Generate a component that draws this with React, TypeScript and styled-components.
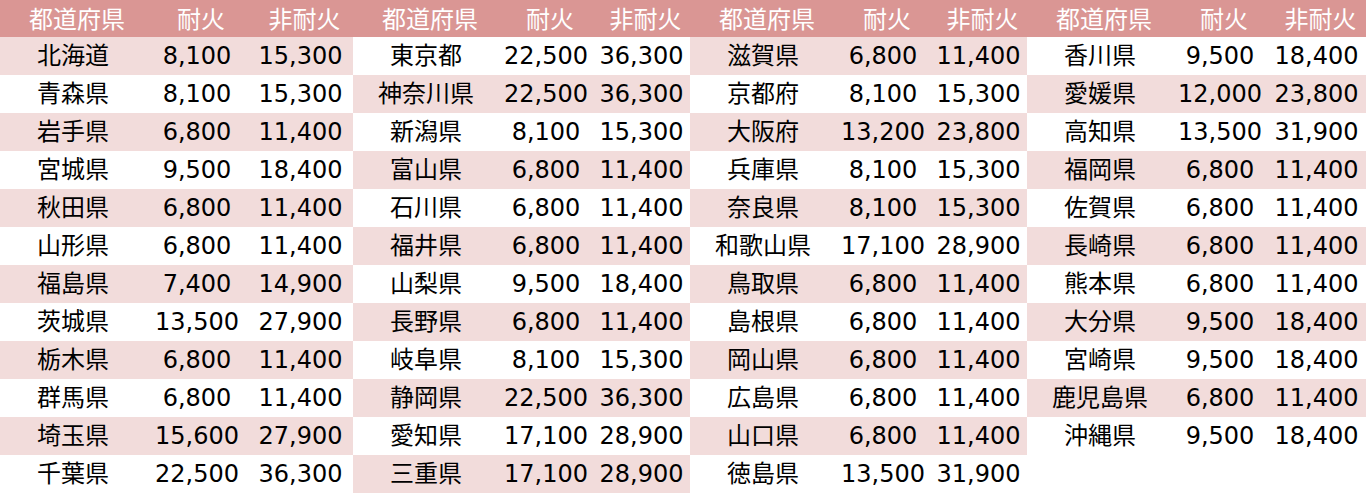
import React from "react";
import styled, { createGlobalStyle } from "styled-components";

const GlobalStyle = createGlobalStyle`
  html, body { margin: 0; padding: 0; background: #ffffff; }
  body { font-family: "DejaVu Sans", "Noto Sans CJK JP", sans-serif; }
`;

type Row = [string, string, string];

const tables: { cols: string; startPink: boolean; rows: Row[] }[] = [
  {
    cols: "146px 102px 105px",
    startPink: true,
    rows: [
      ["北海道", "8,100", "15,300"],
      ["青森県", "8,100", "15,300"],
      ["岩手県", "6,800", "11,400"],
      ["宮城県", "9,500", "18,400"],
      ["秋田県", "6,800", "11,400"],
      ["山形県", "6,800", "11,400"],
      ["福島県", "7,400", "14,900"],
      ["茨城県", "13,500", "27,900"],
      ["栃木県", "6,800", "11,400"],
      ["群馬県", "6,800", "11,400"],
      ["埼玉県", "15,600", "27,900"],
      ["千葉県", "22,500", "36,300"],
    ],
  },
  {
    cols: "146px 94px 97px",
    startPink: false,
    rows: [
      ["東京都", "22,500", "36,300"],
      ["神奈川県", "22,500", "36,300"],
      ["新潟県", "8,100", "15,300"],
      ["富山県", "6,800", "11,400"],
      ["石川県", "6,800", "11,400"],
      ["福井県", "6,800", "11,400"],
      ["山梨県", "9,500", "18,400"],
      ["長野県", "6,800", "11,400"],
      ["岐阜県", "8,100", "15,300"],
      ["静岡県", "22,500", "36,300"],
      ["愛知県", "17,100", "28,900"],
      ["三重県", "17,100", "28,900"],
    ],
  },
  {
    cols: "146px 94px 97px",
    startPink: true,
    rows: [
      ["滋賀県", "6,800", "11,400"],
      ["京都府", "8,100", "15,300"],
      ["大阪府", "13,200", "23,800"],
      ["兵庫県", "8,100", "15,300"],
      ["奈良県", "8,100", "15,300"],
      ["和歌山県", "17,100", "28,900"],
      ["鳥取県", "6,800", "11,400"],
      ["島根県", "6,800", "11,400"],
      ["岡山県", "6,800", "11,400"],
      ["広島県", "6,800", "11,400"],
      ["山口県", "6,800", "11,400"],
      ["徳島県", "13,500", "31,900"],
    ],
  },
  {
    cols: "146px 94px 99px",
    startPink: false,
    rows: [
      ["香川県", "9,500", "18,400"],
      ["愛媛県", "12,000", "23,800"],
      ["高知県", "13,500", "31,900"],
      ["福岡県", "6,800", "11,400"],
      ["佐賀県", "6,800", "11,400"],
      ["長崎県", "6,800", "11,400"],
      ["熊本県", "6,800", "11,400"],
      ["大分県", "9,500", "18,400"],
      ["宮崎県", "9,500", "18,400"],
      ["鹿児島県", "6,800", "11,400"],
      ["沖縄県", "9,500", "18,400"],
    ],
  },
];

const Page = styled.div`
  display: flex;
  flex-direction: row;
  width: 1366px;
  align-items: flex-start;
`;

const Table = styled.div`
  display: flex;
  flex-direction: column;
`;

const HeaderRow = styled.div<{ $cols: string }>`
  display: grid;
  grid-template-columns: ${(p) => p.$cols};
  height: 37px;
  background: #da9694;
`;

const HeaderCell = styled.div`
  display: flex;
  align-items: center;
  justify-content: center;
  padding-left: 8px;
  padding-bottom: 2px;
  box-sizing: border-box;
  color: #ffffff;
  font-size: 24px;
  line-height: 1;
  font-family: "Noto Sans CJK JP", sans-serif;
`;

const BodyRow = styled.div<{ $cols: string; $pink: boolean }>`
  display: grid;
  grid-template-columns: ${(p) => p.$cols};
  height: 38px;
  background: ${(p) => (p.$pink ? "#f2dcdb" : "#ffffff")};
`;

const Cell = styled.div`
  display: flex;
  align-items: center;
  justify-content: center;
  color: #000000;
  font-size: 24px;
  line-height: 1;
  white-space: nowrap;
`;

export default function App() {
  return (
    <>
      <GlobalStyle />
      <Page>
        {tables.map((t, ti) => (
          <Table key={ti}>
            <HeaderRow $cols={t.cols}>
              <HeaderCell>都道府県</HeaderCell>
              <HeaderCell>耐火</HeaderCell>
              <HeaderCell>非耐火</HeaderCell>
            </HeaderRow>
            {t.rows.map((r, ri) => (
              <BodyRow
                key={ri}
                $cols={t.cols}
                $pink={t.startPink ? ri % 2 === 0 : ri % 2 === 1}
              >
                <Cell>{r[0]}</Cell>
                <Cell>{r[1]}</Cell>
                <Cell>{r[2]}</Cell>
              </BodyRow>
            ))}
          </Table>
        ))}
      </Page>
    </>
  );
}
